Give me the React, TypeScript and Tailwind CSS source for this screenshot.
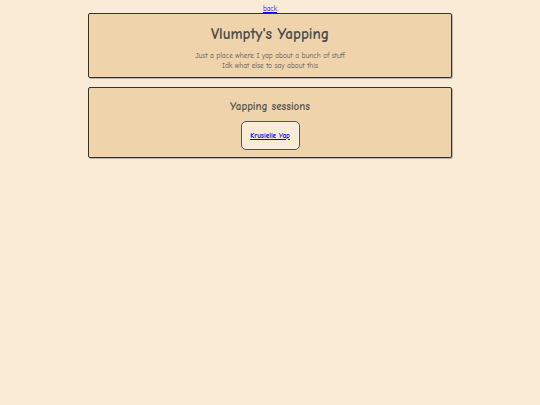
export default function App() {
  return (
    <div
      className="min-h-[405px] w-full bg-[#faebd7] text-[#444]"
      style={{ fontFamily: '"Comic Sans MS", "Comic Neue", "DejaVu Sans", sans-serif' }}
    >
      <div className="mx-auto flex w-[364px] flex-col items-center">
        {/* back link */}
        <a href="#" className="mt-[5px] h-[8px] text-[7px] leading-[8px] text-[#0000ee] underline">
          back
        </a>

        {/* header box */}
        <div className="flex h-[65px] w-full flex-col items-center rounded-[2px] border-[1.5px] border-[#333] bg-[#efd3aa] shadow-[1px_1px_0_rgba(0,0,0,0.25)]">
          <h1 className="mt-[9px] text-[15.2px] font-bold leading-[22px] text-[#4a4a4a]">Vlumpty's Yapping</h1>
          <p className="mt-[6px] text-center text-[7.4px] leading-[10px] text-[#555]">
            Just a place where I yap about a bunch of stuff
            <br />
            Idk what else to say about this
          </p>
        </div>

        {/* sessions box */}
        <div className="mt-[9px] flex h-[71px] w-full flex-col items-center rounded-[2px] border-[1.5px] border-[#333] bg-[#efd3aa] shadow-[1px_1px_0_rgba(0,0,0,0.25)]">
          <h2 className="mt-[11px] text-[11px] font-bold leading-[16px] text-[#555]">Yapping sessions</h2>
          <div className="mt-[6px] flex h-[29px] w-[59px] items-center justify-center rounded-[5px] border border-[#555] bg-[#faebd7]">
            <a href="#" className="mt-[1px] text-[7.2px] font-bold text-[#0000ee] underline">
              Krusielle Yap
            </a>
          </div>
        </div>
      </div>
    </div>
  );
}
